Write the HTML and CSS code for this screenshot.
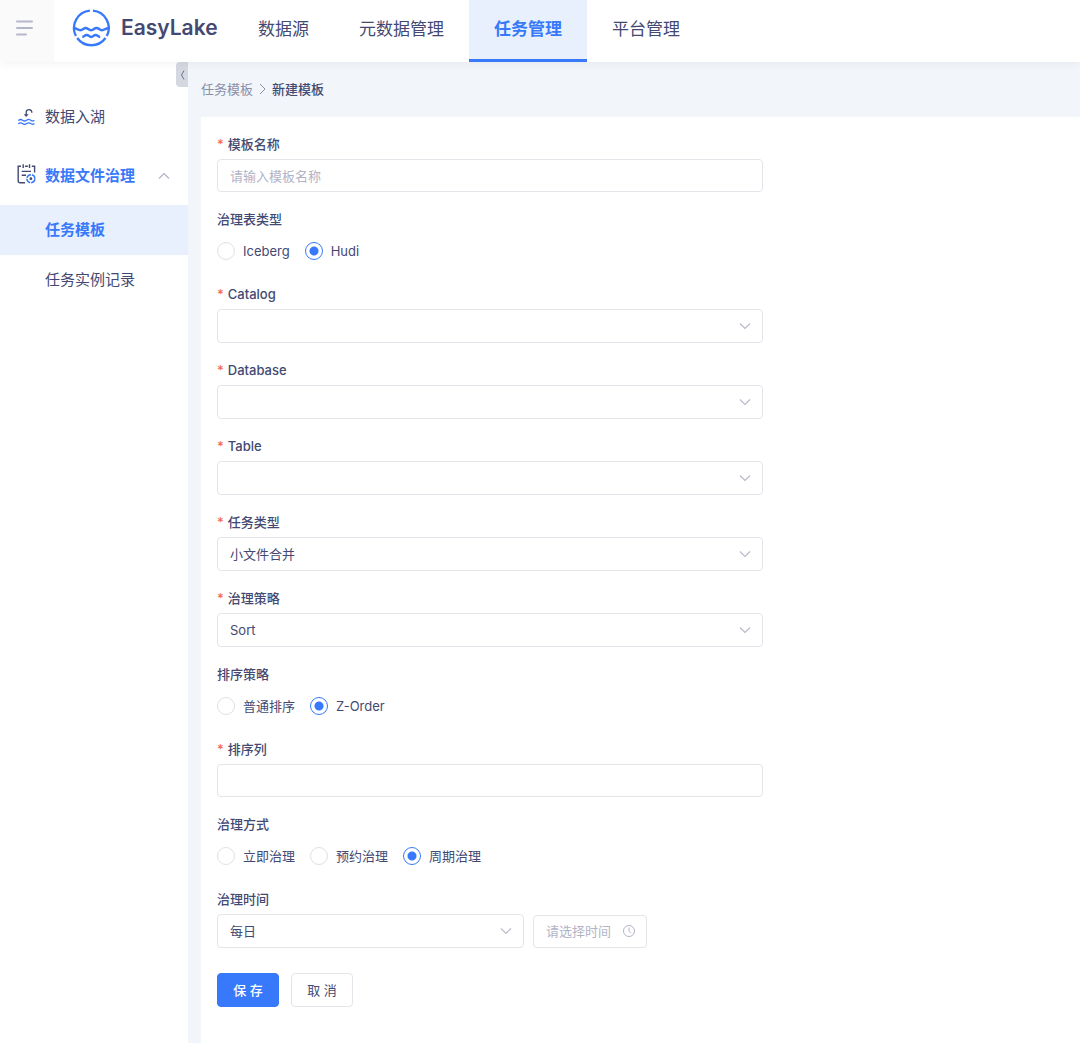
FILE: index.html
```html
<!DOCTYPE html>
<html lang="zh-CN">
<head>
  <meta charset="UTF-8">
  <meta name="viewport" content="width=device-width, initial-scale=1">
  <title>EasyLake</title>
  <link rel="stylesheet" href="styles.css">
</head>
<body>
  <svg class="sprite" aria-hidden="true">
    <symbol id="chevron" viewBox="0 0 12 8">
      <path d="M1 1.5 6 6.5 11 1.5" fill="none" stroke="currentColor" stroke-width="1.2"/>
    </symbol>
  </svg>

  <header class="header">
    <button class="menu-toggle" type="button" aria-label="菜单">
      <svg width="18" height="16" viewBox="0 0 18 16" fill="none" stroke="currentColor" stroke-width="2" stroke-linecap="round">
        <path d="M2 1.5H17M2 8H17M2 14.5H11"/>
      </svg>
    </button>
    <a class="logo" href="#">
      <svg width="38" height="38" viewBox="0 0 38 38" fill="none" stroke="currentColor" stroke-width="2.3">
        <path d="M17.9 1.7A17.4 17.4 0 0 0 3.9 27"/>
        <path d="M20.9 1.7A17.4 17.4 0 0 1 34.8 27"/>
        <path d="M5.2 29A17.4 17.4 0 0 0 33.5 29"/>
        <path d="M2 19.3C5 19 5.500 21.200 8.200 21.200S11.500 19 13.700 19 16.500 21.200 19.200 21.200 22 19 24.500 19 27.300 21.200 30 21.200 33.500 19 36.700 19.300" stroke-width="2.500"/>
        <path d="M10.300 27.900C12.500 27.900 12.500 25.900 14.700 25.900S17 27.900 19.200 27.900 21.500 25.900 23.600 25.900 25.900 27.900 28.200 27.900" stroke-width="2.500"/>
      </svg>
      <span>EasyLake</span>
    </a>
    <nav class="nav">
      <a href="#">数据源</a>
      <a href="#">元数据管理</a>
      <a href="#" class="active">任务管理</a>
      <a href="#">平台管理</a>
    </nav>
  </header>

  <div class="layout">
    <aside class="sidebar">
      <button class="collapse" type="button" aria-label="收起">
        <svg width="5" height="10" viewBox="0 0 5 10" fill="none" stroke="currentColor">
          <path d="M4 0.500 1.500 5 4 9.500"/>
        </svg>
      </button>
      <a class="menu-item" href="#">
        <svg class="menu-icon" width="20" height="20" viewBox="0 0 20 20" fill="none" stroke-width="1.3">
          <path d="M9.200 10V7.200C9.200 5.500 10.300 4.600 12 4.600S14.900 5.600 14.900 7.800" stroke="#434972"/>
          <path d="M6.800 9.300H11.600L9.200 12.100Z" fill="#434972"/>
          <path d="M1.300 15.600C2.900 14.100 4.100 14.100 5.500 15.200S8.200 16.300 9.600 15.200 12.300 14.100 13.700 15.200 16.300 16.100 17.400 15.200M1.300 19C2.900 17.500 4.100 17.500 5.500 18.600S8.200 19.700 9.600 18.600 12.300 17.500 13.700 18.600 16.300 19.500 17.400 18.600" stroke="#3779fa"/>
        </svg>
        <span>数据入湖</span>
      </a>
      <a class="menu-item open" href="#">
        <svg class="menu-icon" width="20" height="20" viewBox="0 0 20 20" fill="none" stroke-width="1.4">
          <path d="M8 18.800H3.200Q1.200 18.800 1.200 16.800V2.300H4M8 2.300H10.800M14.800 2.300H17.600V8.500M6.200 0.300V4M12.500 0.300V4M4.700 7.400H14M4.700 11.200H9" stroke="#434972"/>
          <circle cx="13.900" cy="14.700" r="4" stroke="#3779fa" stroke-width="1.500" stroke-dasharray="5.300 1" stroke-dashoffset="-0.500"/>
          <circle cx="13.900" cy="14.700" r="1.400" fill="#434972"/>
        </svg>
        <span>数据文件治理</span>
        <svg class="menu-arrow" width="12" height="8"><use href="#chevron"/></svg>
      </a>
      <a class="submenu-item active" href="#">任务模板</a>
      <a class="submenu-item" href="#">任务实例记录</a>
    </aside>

    <main class="main">
      <nav class="breadcrumb">
        <a href="#">任务模板</a>
        <svg width="7" height="12" viewBox="0 0 7 12" fill="none" stroke="currentColor">
          <path d="M1 1 6 6 1 11"/>
        </svg>
        <span>新建模板</span>
      </nav>

      <form class="card">
        <div class="field">
          <label class="label required" for="name">模板名称</label>
          <input class="input" id="name" type="text" placeholder="请输入模板名称">
        </div>

        <div class="field" role="radiogroup" aria-labelledby="tableType">
          <span class="label" id="tableType">治理表类型</span>
          <div class="radios">
            <label><input type="radio" name="tableType">Iceberg</label>
            <label><input type="radio" name="tableType" checked>Hudi</label>
          </div>
        </div>

        <div class="field">
          <label class="label required" for="catalog">Catalog</label>
          <div class="select">
            <select id="catalog"><option></option></select>
            <svg width="12" height="8"><use href="#chevron"/></svg>
          </div>
        </div>

        <div class="field">
          <label class="label required" for="database">Database</label>
          <div class="select">
            <select id="database"><option></option></select>
            <svg width="12" height="8"><use href="#chevron"/></svg>
          </div>
        </div>

        <div class="field">
          <label class="label required" for="table">Table</label>
          <div class="select">
            <select id="table"><option></option></select>
            <svg width="12" height="8"><use href="#chevron"/></svg>
          </div>
        </div>

        <div class="field">
          <label class="label required" for="taskType">任务类型</label>
          <div class="select">
            <select id="taskType"><option>小文件合并</option></select>
            <svg width="12" height="8"><use href="#chevron"/></svg>
          </div>
        </div>

        <div class="field">
          <label class="label required" for="strategy">治理策略</label>
          <div class="select">
            <select id="strategy"><option>Sort</option></select>
            <svg width="12" height="8"><use href="#chevron"/></svg>
          </div>
        </div>

        <div class="field" role="radiogroup" aria-labelledby="sortType">
          <span class="label" id="sortType">排序策略</span>
          <div class="radios">
            <label><input type="radio" name="sortType">普通排序</label>
            <label><input type="radio" name="sortType" checked>Z-Order</label>
          </div>
        </div>

        <div class="field">
          <label class="label required" for="sortColumn">排序列</label>
          <input class="input" id="sortColumn" type="text">
        </div>

        <div class="field" role="radiogroup" aria-labelledby="mode">
          <span class="label" id="mode">治理方式</span>
          <div class="radios">
            <label><input type="radio" name="mode">立即治理</label>
            <label><input type="radio" name="mode">预约治理</label>
            <label><input type="radio" name="mode" checked>周期治理</label>
          </div>
        </div>

        <div class="field">
          <label class="label" for="cycle">治理时间</label>
          <div class="time-row">
            <div class="select">
              <select id="cycle"><option>每日</option></select>
              <svg width="12" height="8"><use href="#chevron"/></svg>
            </div>
            <div class="time-picker">
              <input class="input" type="text" placeholder="请选择时间" aria-label="请选择时间">
              <svg width="12" height="12" viewBox="0 0 12 12" fill="none" stroke="currentColor">
                <circle cx="6" cy="6" r="5.500"/>
                <path d="M6 2.500V6.300L8 8.300"/>
              </svg>
            </div>
          </div>
        </div>

        <div class="actions">
          <button class="button primary" type="submit">保 存</button>
          <button class="button" type="button">取 消</button>
        </div>
      </form>
    </main>
  </div>
</body>
</html>
```
FILE: styles.css
```css
* {
  box-sizing: border-box;
}

body {
  margin: 0;
  min-height: 100vh;
  display: flex;
  flex-direction: column;
  font-family: Inter, "Noto Sans CJK SC", sans-serif;
  font-size: 13px;
  line-height: 20px;
  color: #434972;
  background: #f2f6fa;
}

a {
  color: inherit;
  text-decoration: none;
}

button,
input,
select {
  font: inherit;
  color: inherit;
}

button {
  cursor: pointer;
}

.sprite {
  position: absolute;
  width: 0;
  height: 0;
}

/* header */
.header {
  position: relative;
  z-index: 1;
  display: flex;
  height: 62px;
  background: #fff;
  box-shadow: 0 2px 8px rgba(0, 21, 41, 0.05);
}

.menu-toggle {
  width: 54px;
  padding: 0 0 6px 15px;
  border: none;
  background: #fafafa;
  color: #b5b7c9;
  text-align: left;
}

.menu-toggle svg {
  display: block;
}

.logo {
  display: flex;
  align-items: center;
  gap: 11px;
  width: 179px;
  padding: 0 0 6px 18px;
  color: #3779fa;
}

.logo span {
  font-size: 21px;
  font-weight: 600;
  line-height: 28px;
  color: #434972;
}

.nav {
  display: flex;
}

.nav a {
  padding: 17px 25px 0;
  font-size: 17px;
  line-height: 24px;
  border-bottom: 3px solid transparent;
}

.nav a.active {
  color: #3779fa;
  font-weight: 600;
  background: #e8f0fe;
  border-bottom-color: #3779fa;
}

/* sidebar */
.layout {
  flex: 1;
  display: flex;
}

.sidebar {
  position: relative;
  flex: none;
  width: 188px;
  padding-top: 25px;
  background: #fff;
}

.collapse {
  position: absolute;
  top: 0;
  right: 0;
  display: flex;
  align-items: center;
  justify-content: center;
  width: 12px;
  height: 25px;
  padding: 0;
  border: none;
  border-radius: 4px 0 0 4px;
  background: #d5d8e1;
  color: #6b7090;
}

.menu-item {
  display: flex;
  align-items: center;
  height: 59px;
  padding: 0 18px 0 17px;
  font-size: 15px;
}

.menu-icon {
  margin: 0 8px 4px 0;
}

.menu-item.open {
  color: #3779fa;
  font-weight: 600;
}

.menu-arrow {
  margin-left: auto;
  color: #b1b3c6;
  transform: rotate(180deg);
}

.submenu-item {
  display: block;
  padding-left: 45px;
  font-size: 15px;
  line-height: 50px;
}

.submenu-item.active {
  color: #3779fa;
  font-weight: 600;
  background: #e8f0fe;
}

/* content */
.main {
  flex: 1;
  display: flex;
  flex-direction: column;
  padding: 17px 0 0 13px;
}

.breadcrumb {
  display: flex;
  align-items: center;
  gap: 6px;
  margin-bottom: 18px;
  color: #8b8ea8;
}

.breadcrumb span {
  color: #434972;
  font-weight: 500;
}

.card {
  flex: 1;
  padding: 17px 16px;
  background: #fff;
}

.field {
  max-width: 546px;
  margin-bottom: 17px;
}

.label {
  display: block;
  margin-bottom: 5px;
  font-weight: 500;
}

.label.required::before {
  content: "*";
  margin-right: 4px;
  color: #f5694b;
}

.input {
  display: block;
  width: 100%;
  height: 33px;
  padding: 0 12px;
  border: 1px solid #e4e5eb;
  border-radius: 4px;
  background: #fff;
}

.input::placeholder {
  color: #b1b3c6;
  opacity: 1;
}

.select {
  position: relative;
}

.select select {
  display: block;
  width: 100%;
  height: 34px;
  padding: 0 36px 0 12px;
  border: 1px solid #e4e5eb;
  border-radius: 4px;
  background: #fff;
  appearance: none;
}

.select svg {
  position: absolute;
  right: 12px;
  top: 13px;
  color: #b9bbcc;
  pointer-events: none;
}

.radios {
  display: flex;
  align-items: center;
  gap: 15px;
  height: 33px;
}

.radios label {
  display: flex;
  align-items: center;
  gap: 8px;
}

.radios input {
  appearance: none;
  width: 18px;
  height: 18px;
  margin: 0;
  border: 1px solid #e0e1e8;
  border-radius: 50%;
  background: #fff;
}

.radios input:checked {
  border-color: #3779fa;
  background: radial-gradient(circle, #3779fa 4px, #fff 5px);
}

.time-row {
  display: flex;
  align-items: center;
  gap: 9px;
}

.time-row .select {
  flex: none;
  width: 307px;
}

.time-picker {
  position: relative;
  width: 114px;
}

.time-picker .input {
  padding-right: 30px;
}

.time-picker svg {
  position: absolute;
  right: 12px;
  top: 10px;
  color: #b1b3c6;
}

.actions {
  display: flex;
  gap: 12px;
  padding-top: 8px;
}

.button {
  width: 62px;
  height: 34px;
  padding: 0;
  border: 1px solid #e4e5eb;
  border-radius: 4px;
  background: #fff;
}

.button.primary {
  border-color: #3779fa;
  background: #3779fa;
  color: #fff;
  font-weight: 500;
}
```
